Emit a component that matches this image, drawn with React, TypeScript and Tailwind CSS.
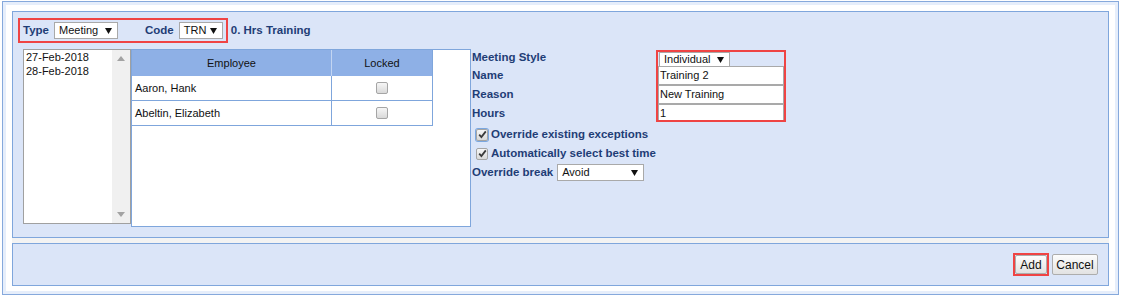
import React from "react";

const Arrow = () => (
    <svg width="7" height="6" viewBox="0 0 7 6" className="shrink-0">
        <path d="M0 0 H7 L3.5 6 Z" fill="#111" />
    </svg>
);

type SelectProps = { value: string; className?: string };

const FakeSelect: React.FC<SelectProps> = ({ value, className = "" }) => (
    <div
        className={`flex items-center justify-between bg-white border border-[#a9a9a9] pl-[4px] pr-[5px] text-[11px] font-normal text-[#111] ${className}`}
    >
        <span>{value}</span>
        <Arrow />
    </div>
);

const Check = ({ checked = false, focus = false }: { checked?: boolean; focus?: boolean }) => (
    <span
        className={`inline-flex items-center justify-center rounded-[2px] ${
            focus ? "ring-1 ring-[#7aa7e0] ring-offset-0" : ""
        }`}
    >
        <span className="flex h-[12px] w-[12px] items-center justify-center rounded-[2px] border border-[#a5a5a5] bg-[linear-gradient(180deg,#f6f6f6,#d9d9d9)]">
            {checked && (
                <svg width="9" height="9" viewBox="0 0 9 9">
                    <path d="M1.2 4.6 L3.4 7 L7.8 1.4" fill="none" stroke="#3a3a3a" strokeWidth="1.8" />
                </svg>
            )}
        </span>
    </span>
);

const ScrollArrow = ({ up }: { up?: boolean }) => (
    <svg width="8" height="5" viewBox="0 0 8 5">
        <path d={up ? "M0 5 H8 L4 0 Z" : "M0 0 H8 L4 5 Z"} fill="#a3a3a3" />
    </svg>
);

const employees = ["Aaron, Hank", "Abeltin, Elizabeth"];

export default function App() {
    return (
        <div className="bg-white pl-[2px] pr-[2px] pt-[1px] font-['Liberation_Sans',Arial,sans-serif] text-[11px]">
            {/* outer frame */}
            <div className="border border-[#86a9dc] bg-[#e6eefb] p-[3px]">
                <div className="bg-white px-[6px] pt-[6px] pb-[5px]">
                    {/* === top panel === */}
                    <div className="h-[227px] border border-[#7fa6dc] bg-[#dbe5f8] px-[5px] pt-[6px]">
                        <div className="flex items-center text-[11.5px]">
                            <div className="flex h-[25px] items-center border-2 border-[#ef4444] px-[3px]">
                                <span className="font-bold text-[#1f3d76]">Type</span>
                                <FakeSelect value="Meeting" className="ml-[5px] h-[17px] w-[64px]" />
                                <span className="ml-[27px] font-bold text-[#1f3d76]">Code</span>
                                <FakeSelect value="TRN" className="ml-[5px] h-[17px] w-[44px]" />
                            </div>
                            <span className="ml-[3px] font-bold text-[#1f3d76]">0. Hrs Training</span>
                        </div>

                        <div className="ml-[5px] mt-[6px] flex items-start">
                            {/* date list */}
                            <div className="flex h-[175px] w-[108px] border border-[#a0a0a0] bg-white">
                                <div className="flex-1 pl-[2px] leading-[14px] text-[#111]">
                                    <div>27-Feb-2018</div>
                                    <div>28-Feb-2018</div>
                                </div>
                                <div className="flex w-[18px] flex-col items-center justify-between bg-[#f0f0f0] py-[6px]">
                                    <ScrollArrow up />
                                    <ScrollArrow />
                                </div>
                            </div>

                            {/* employee table */}
                            <div className="h-[178px] w-[340px] border border-[#7fa6dc] bg-white">
                                <div className="w-[301px] border-r border-[#7fa6dc]">
                                    <div className="grid h-[26px] grid-cols-[200px_100px] bg-[#8eb0e6] text-[#111]">
                                        <div className="flex items-center justify-center border-r border-[#c3d5f2]">Employee</div>
                                        <div className="flex items-center justify-center">Locked</div>
                                    </div>
                                    {employees.map((e) => (
                                        <div
                                            key={e}
                                            className="grid h-[25px] grid-cols-[200px_100px] border-b border-[#7fa6dc] text-[#111]"
                                        >
                                            <div className="flex items-center border-r border-[#7fa6dc] pl-[3px]">{e}</div>
                                            <div className="flex items-center justify-center">
                                                <Check />
                                            </div>
                                        </div>
                                    ))}
                                </div>
                            </div>

                            {/* form */}
                            <div className="ml-[1px] mt-[1px] flex flex-col text-[11.5px]">
                                <div className="flex">
                                    <div className="flex w-[184px] flex-col font-bold text-[#1f3d76]">
                                        <div className="flex h-[16px] items-center">Meeting Style</div>
                                        <div className="flex h-[19px] items-center">Name</div>
                                        <div className="flex h-[19px] items-center">Reason</div>
                                        <div className="flex h-[19px] items-center">Hours</div>
                                    </div>
                                    <div className="h-[72px] w-[130px] border-2 border-[#ef4444] text-[11px]">
                                        <div className="flex h-[68px] flex-col overflow-hidden">
                                            <div className="h-[14px]">
                                                <FakeSelect value="Individual" className="ml-[1px] h-[15px] w-[71px]" />
                                            </div>
                                            {["Training 2", "New Training", "1"].map((v) => (
                                                <div
                                                    key={v}
                                                    className="flex h-[19px] shrink-0 items-center border border-[#a9a9a9] bg-white pl-[1px] text-[#111]"
                                                >
                                                    {v}
                                                </div>
                                            ))}
                                        </div>
                                    </div>
                                </div>

                                <div className="mt-[2px] flex h-[19px] items-center pl-[4px]">
                                    <Check checked focus />
                                    <span className="ml-[3px] font-bold text-[#1f3d76]">Override existing exceptions</span>
                                </div>
                                <div className="flex h-[19px] items-center pl-[4px]">
                                    <Check checked />
                                    <span className="ml-[3px] font-bold text-[#1f3d76]">Automatically select best time</span>
                                </div>
                                <div className="flex h-[19px] items-center">
                                    <span className="font-bold text-[#1f3d76]">Override break</span>
                                    <FakeSelect value="Avoid" className="ml-[4px] h-[17px] w-[87px]" />
                                </div>
                            </div>
                        </div>
                    </div>

                    {/* gap */}
                    <div className="h-[5px] bg-[#f3f3f3]" />

                    {/* === bottom panel === */}
                    <div className="flex h-[43px] items-center justify-end border border-[#7fa6dc] bg-[#dbe5f8] pr-[10px]">
                        <div className="flex h-[23px] w-[36px] items-center justify-center border-2 border-[#ef4444]">
                            <button className="h-[19px] w-[32px] rounded-[2px] border border-[#adadad] bg-[linear-gradient(180deg,#fdfdfd,#e2e2e2)] text-[12px] text-[#111]">
                                Add
                            </button>
                        </div>
                        <button className="ml-[3px] h-[21px] w-[46px] rounded-[2px] border border-[#adadad] bg-[linear-gradient(180deg,#fdfdfd,#e2e2e2)] text-[12px] text-[#111]">
                            Cancel
                        </button>
                    </div>
                </div>
            </div>
        </div>
    );
}
